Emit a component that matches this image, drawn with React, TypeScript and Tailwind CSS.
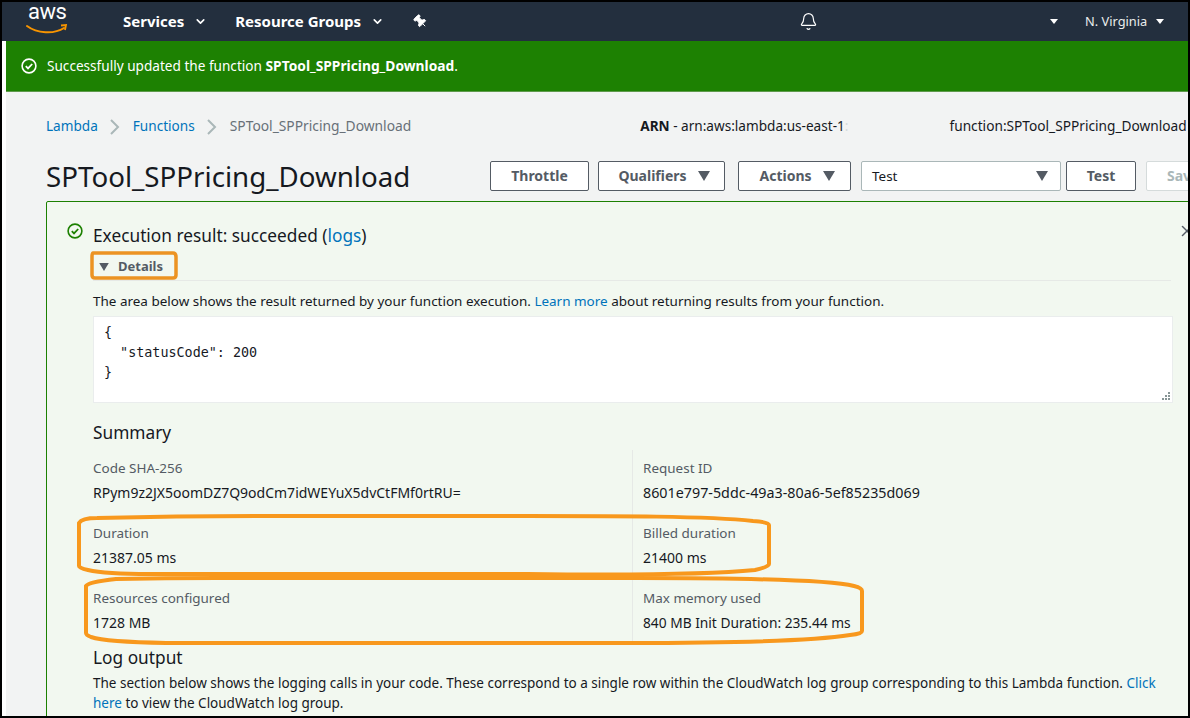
import React from 'react';
import { ChevronDown, Bell, Pin, X } from 'lucide-react';

const Caret = ({ className }: { className: string }) => (
  <svg viewBox="0 0 12 10" className={className} fill="currentColor">
    <path d="M0 0h12L6 10z" />
  </svg>
);

const CheckCircle = ({ className }: { className: string }) => (
  <svg viewBox="0 0 16 16" className={className} fill="none" stroke="currentColor" strokeWidth="1.6">
    <circle cx="8" cy="8" r="6.9" />
    <path d="M4.8 8.2l2.2 2.2 4.2-4.4" strokeWidth="1.8" />
  </svg>
);

const Crumb = () => (
  <svg viewBox="0 0 10 16" className="w-[10px] h-[16px] mx-[12.5px] text-[#aab7b8]" fill="none" stroke="currentColor" strokeWidth="2">
    <path d="M1 1l7 7-7 7" />
  </svg>
);

const AwsLogo = () => (
  <div className="relative w-[42px] h-[34px] mt-[-4px]">
    <span className="absolute left-[2px] top-[-3px] text-[22px] leading-[24px] tracking-[-0.5px] text-white font-['Roboto',sans-serif]">aws</span>
    <svg viewBox="0 0 42 12" className="absolute left-0 top-[21px] w-[42px] h-[12px]" fill="none">
      <path d="M1 2c10 7.500 27 8.500 37 2" stroke="#f79400" strokeWidth="2" strokeLinecap="round" />
      <path d="M35 1.500l5-.5-1 5" stroke="#f79400" strokeWidth="1.800" />
    </svg>
  </div>
);

const Button = ({ label, caret, width }: { label: string; caret?: boolean; width: string }) => (
  <div className={`${width} ${caret ? 'pl-[5px]' : ''} h-[30px] flex items-center justify-center gap-[11px] bg-white border border-[#545b64] rounded-[2px] text-[14px] font-bold text-[#545b64] pb-[1px]`}>
    {label}
    {caret && <Caret className="w-[12px] h-[10px] text-[#545b64]" />}
  </div>
);

interface FieldProps {
  label: string;
  value: string;
  right?: boolean;
  valueSize?: string;
}

const Field = ({ label, value, right, valueSize = 'text-[14px]' }: FieldProps) => (
  <div className={right ? 'w-[540px] pl-[10px] border-l border-[#e6e9e6] h-[65px] pt-[8px]' : 'w-[539px] h-[65px] pt-[8px]'}>
    <div className="text-[13.47px] leading-[20px] text-[#545b64]">{label}</div>
    <div className={`${valueSize} leading-[20px] text-[#16191f] mt-[5px]`}>{value}</div>
  </div>
);

export default function App() {
  return (
    <div className="w-[1190px] h-[718px] overflow-hidden relative bg-white border-y-2 border-x-2 border-black font-['Noto_Sans',sans-serif]">
      <div className="h-[39px] bg-[#232f3e] flex items-center text-white relative">
        <div className="ml-[24px] w-[97px]">
          <AwsLogo />
        </div>
        <span className="text-[15px] font-bold">Services</span>
        <ChevronDown className="w-[13px] h-[13px] ml-[10px]" strokeWidth={3} />
        <span className="text-[15px] font-bold ml-[28px]">Resource Groups</span>
        <ChevronDown className="w-[13px] h-[13px] ml-[10px]" strokeWidth={3} />
        <Pin className="w-[15px] h-[15px] ml-[29px] -rotate-45 fill-white" strokeWidth={1.5} />
        <Bell className="w-[19px] h-[19px] ml-[371px]" strokeWidth={1.5} />
        <svg viewBox="0 0 8 5" className="w-[8px] h-[5px] ml-[232px]" fill="white"><path d="M0 0h8L4 5z" /></svg>
        <span className="text-[12.8px] ml-[27px] text-[#eaeded]">N. Virginia</span>
        <svg viewBox="0 0 8 5" className="w-[8px] h-[5px] ml-[9px]" fill="white"><path d="M0 0h8L4 5z" /></svg>
      </div>

      <div className="flex h-[675px]">
        <div className="w-[4px] shrink-0 bg-white" />
        <div className="w-[1182px] shrink-0 bg-[#f2f3f3] overflow-hidden">
          <div className="h-[51px] bg-[#1d8102] border-b border-[#5f9a4c] flex items-center pl-[15px] text-white text-[13.6px]">
            <CheckCircle className="w-[16px] h-[16px]" />
            <span className="ml-[10px]">Successfully updated the function <b className="text-[13.8px]">SPTool_SPPricing_Download</b>.</span>
          </div>

          <div className="pl-[40px] w-[1300px]">
            <div className="h-[69px] flex items-center text-[13.6px]">
              <span className="text-[#0073bb]">Lambda</span>
              <Crumb />
              <span className="text-[#0073bb]">Functions</span>
              <Crumb />
              <span className="text-[#687078] text-[13.8px]">SPTool_SPPricing_Download</span>
              <span className="ml-[229px] text-[#16191f]"><b>ARN</b> - arn:aws:lambda:us-east-1<span className="text-[#d5dbdb]">:</span></span>
              <span className="ml-[101px] text-[13.7px] text-[#16191f]">function:SPTool_SPPricing_Download</span>
            </div>

            <div className="h-[30px] flex items-center">
              <h1 className="text-[27.7px] leading-[30px] font-normal text-[#16191f] w-[444px]">SPTool_SPPricing_Download</h1>
              <Button width="w-[99px]" label="Throttle" />
              <div className="ml-[9px]"><Button width="w-[127px]" label="Qualifiers" caret /></div>
              <div className="ml-[13px]"><Button width="w-[113px]" label="Actions" caret /></div>
              <div className="ml-[10px] w-[200px] h-[30px] bg-white border border-[#aab7b8] rounded-[2px] flex items-center justify-between pl-[10px] pr-[12px] text-[13.47px] text-[#16191f]">
                Test
                <Caret className="w-[12px] h-[10px] text-[#545b64]" />
              </div>
              <div className="ml-[5px]"><Button width="w-[70px]" label="Test" /></div>
              <div className="ml-[10px] h-[30px] w-[70px] bg-white border border-[#d5dbdb] rounded-[2px] flex items-center pl-[20px] pb-[1px] text-[14px] font-bold text-[#aab7b8]">Save</div>
            </div>

            <div className="mt-[10px] w-[1160px] h-[560px] border border-[#1d8102] rounded-[2px] bg-[#f2f8f0] relative pl-[46px] pt-[23px]">
              <CheckCircle className="absolute left-[20px] top-[21px] w-[16px] h-[16px] text-[#1d8102]" />
              <X className="absolute left-[1131px] top-[20px] w-[18px] h-[18px] text-[#545b64]" strokeWidth={2} />
              <div className="text-[17.3px] leading-[22px] text-[#16191f]">
                Execution result: succeeded (<span className="text-[#0073bb]">logs</span>)
              </div>
              <div className="mt-[7px] h-[27px] w-[1078px] border-b border-[#e6e9e6] flex items-center pl-[6px] text-[13px] font-bold text-[#545b64]">
                <Caret className="w-[10px] h-[8px] text-[#545b64] mr-[9px]" />
                Details
              </div>
              <div className="mt-[10px] text-[13.47px] leading-[20px] text-[#16191f]">
                The area below shows the result returned by your function execution. <span className="text-[#0073bb]">Learn more</span> about returning results from your function.
              </div>
              <div className="mt-[5px] w-[1080px] h-[87px] bg-white border border-[#eaeded] relative pl-[10px] pt-[6px] font-['DejaVu_Sans_Mono',monospace] text-[13.4px] leading-[20px] text-[#16191f] whitespace-pre">
                {'{\n  "statusCode": 200\n}'}
                <svg viewBox="0 0 8 8" className="absolute right-[2px] bottom-[2px] w-[8px] h-[8px]" fill="#879596">
                  <path d="M6 0h2v2H6zM3 3h2v2H3zM6 3h2v2H6zM0 6h2v2H0zM3 6h2v2H3zM6 6h2v2H6z" />
                </svg>
              </div>
              <div className="mt-[18px] text-[17.3px] leading-[24px] text-[#16191f]">Summary</div>
              <div className="flex mt-[5px]">
                <Field label="Code SHA-256" value="RPym9z2JX5oomDZ7Q9odCm7idWEYuX5dvCtFMf0rtRU=" />
                <Field right label="Request ID" value="8601e797-5ddc-49a3-80a6-5ef85235d069" valueSize="text-[14.3px]" />
              </div>
              <div className="flex">
                <Field label="Duration" value="21387.05 ms" />
                <Field right label="Billed duration" value="21400 ms" />
              </div>
              <div className="flex">
                <Field label="Resources configured" value="1728 MB" />
                <Field right label="Max memory used" value="840 MB Init Duration: 235.44 ms" valueSize="text-[13.75px]" />
              </div>
              <div className="text-[17.3px] leading-[22px] text-[#16191f] mt-[2px]">Log output</div>
              <div className="w-[1080px] mt-[4px] text-[13.5px] leading-[20px] text-[#16191f]">
                The section below shows the logging calls in your code. These correspond to a single row within the CloudWatch log group corresponding to this Lambda function. <span className="text-[#0073bb]">Click</span> <span className="text-[#0073bb]">here</span> to view the CloudWatch log group.
              </div>
            </div>
          </div>
        </div>
      </div>

      {/* hand drawn annotations from the screenshot */}
      <svg viewBox="0 0 1190 718" className="absolute left-[-2px] top-[-2px] w-[1190px] h-[718px] pointer-events-none" fill="none">
        <path d="M93 253h80q3 0 3 4v18q0 3-3 3H95q-3 0-3-3v-18q0-4 1-4z" stroke="#ec9322" strokeWidth="3.500" />
        <path d="M79 523q3-5 18-5 90-2 180-2h250c90 0 180 0 226 5q16 1 16 4v39q0 3-14 6-60 6-228 4H150q-45 0-62-4-9-2-9-4z" stroke="#f8981d" strokeWidth="4" />
        <path d="M86 586q2-4 30-7 50-1 100-1h420c90 0 190 1 218 8q8 2 8 5v40q0 3-12 4-50 8-222 8H166q-60-1-75-6-5-2-5-4z" stroke="#f8981d" strokeWidth="4" />
      </svg>
    </div>
  );
}
